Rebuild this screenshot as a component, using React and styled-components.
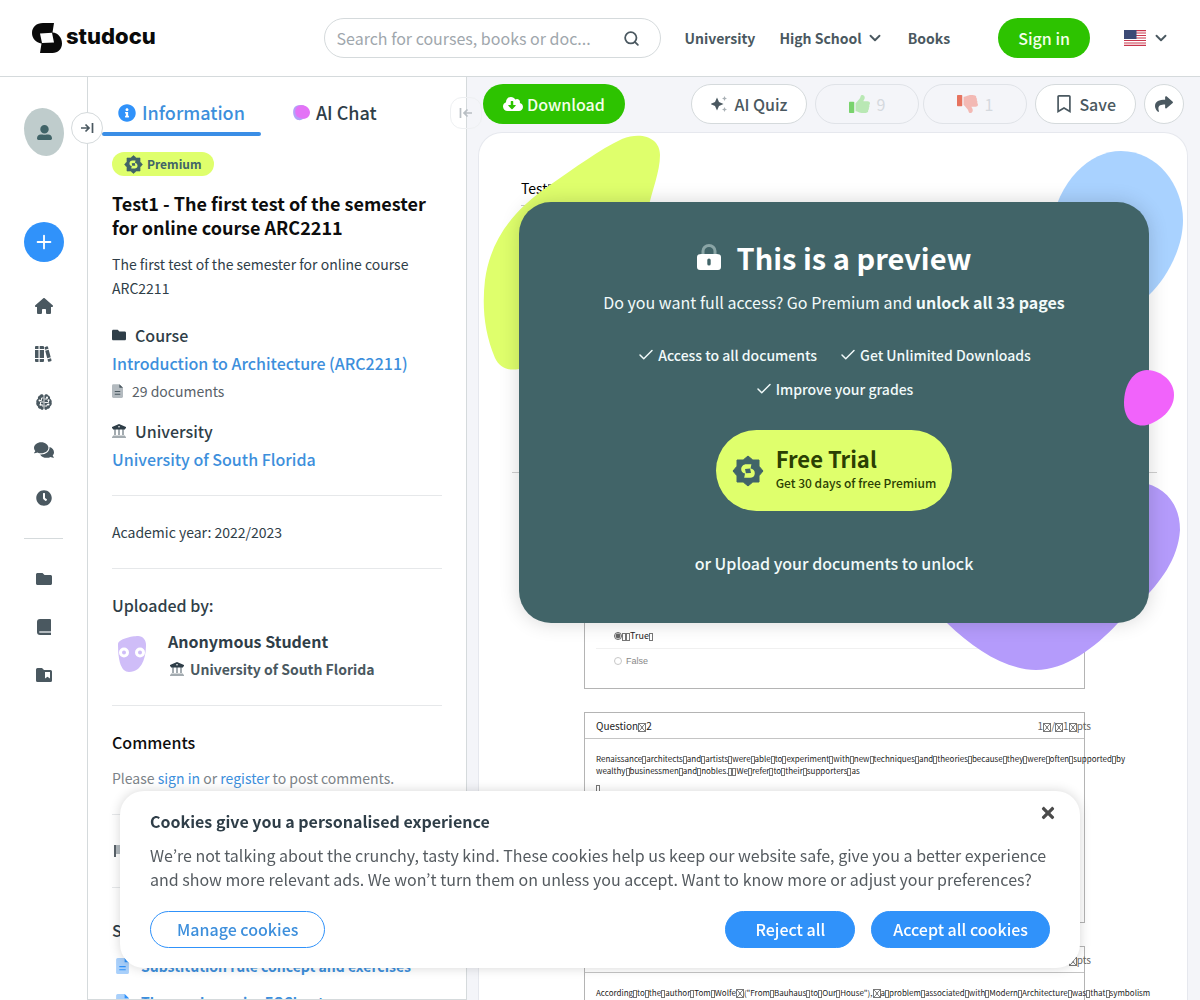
import React from "react";
import styled, { createGlobalStyle, css } from "styled-components";
import {
    FaInfoCircle,
    FaCloudDownloadAlt,
    FaShare,
    FaUserAlt,
    FaComments,
    FaClock,
    FaFolder,
    FaTimes,
    FaRegBookmark,
} from "react-icons/fa";
import { FaHouse } from "react-icons/fa6";
import { FiSearch, FiChevronDown, FiCheck, FiPlus } from "react-icons/fi";

const colors = {
    blue: "#3092fa",
    link: "#3d8fdc",
    green: "#2dc300",
    teal: "#416468",
    lime: "#dfff6c",
    ink: "#2f3e48",
    grey: "#4a5860",
    border: "#d5dadc",
    rule: "#e6e8ea",
    canvas: "#f4f5f9",
};

const GlobalStyle = createGlobalStyle`
  *, *:before, *:after {
    box-sizing: border-box;
  }

  body {
    margin: 0;
    background-color: #fff;
    color: ${colors.ink};
    font-family: "Noto Sans CJK KR", "Noto Sans CJK SC", "Noto Sans", sans-serif;
    font-size: 16px;
    line-height: 24px;
  }

  h1, h2, h3, p, ul {
    margin: 0;
    padding: 0;
    font-size: inherit;
  }

  ul {
    list-style: none;
  }

  a {
    color: inherit;
    text-decoration: none;
  }

  button, input {
    font: inherit;
    color: inherit;
  }

  button {
    padding: 0;
    border: 0;
    background: none;
    cursor: pointer;
  }

  svg {
    display: block;
    flex-shrink: 0;
  }
`;

const Page = styled.div`
  height: 100vh;
  display: flex;
  flex-direction: column;
  overflow: hidden;
`;

/* ---------- top bar ---------- */

const TopBar = styled.header`
  display: flex;
  align-items: center;
  padding: 18px 30px 18px 32px;
  border-bottom: 1px solid ${colors.border};
`;

const Logo = styled.a`
  display: flex;
  align-items: flex-start;
  gap: 4px;
  margin-right: auto;
  color: #0a0a0a;
  font-family: Inter, "Liberation Sans", sans-serif;
  font-size: 22px;
  font-weight: 800;
  line-height: 26px;
`;

const SearchBox = styled.form`
  display: flex;
  align-items: center;
  flex: 0 1 337px;
  height: 40px;
  padding: 0 20px 0 12px;
  border: 1px solid ${colors.border};
  border-radius: 20px;

  & input {
    flex: 1;
    min-width: 0;
    padding: 0;
    border: 0;
    outline: 0;
    background: none;
    text-overflow: ellipsis;
  }

  & input::placeholder {
    color: #9fa7ad;
    opacity: 1;
  }
`;

const TopNav = styled.nav`
  display: flex;
  align-items: center;
  gap: 24px;
  margin: 0 48px 0 24px;
  color: ${colors.grey};
  font-size: 14px;
  font-weight: 700;

  & button {
    display: flex;
    align-items: center;
    gap: 4px;
  }
`;

const SignIn = styled.a`
  padding: 8px 20px;
  border-radius: 20px;
  background-color: ${colors.green};
  color: #f4ffe9;
  font-weight: 500;
`;

const Country = styled.button`
  display: flex;
  align-items: center;
  gap: 6px;
  margin-left: 34px;
`;

/* ---------- rail on the left ---------- */

const Body = styled.div`
  flex: 1;
  min-height: 0;
  display: flex;
`;

const Rail = styled.nav`
  position: relative;
  flex: 0 0 87px;
  min-width: 0;
  padding: 31px 24px 0;
  color: ${colors.grey};

  & hr {
    margin: 16px 0;
    border: 0;
    border-top: 1px solid ${colors.border};
  }
`;

const Avatar = styled.button`
  display: flex;
  align-items: center;
  justify-content: center;
  width: 40px;
  height: 48px;
  margin-bottom: 66px;
  border-radius: 46% 54% 44% 56% / 42% 52% 48% 58%;
  background-color: #bfcccc;
  color: ${colors.teal};
`;

const AddButton = styled.button`
  display: flex;
  align-items: center;
  justify-content: center;
  width: 40px;
  height: 40px;
  margin-bottom: 20px;
  border-radius: 20px;
  background-color: ${colors.blue};
  color: #fff;
`;

const RailItem = styled.a`
  display: flex;
  align-items: center;
  justify-content: center;
  height: 48px;
`;

const RailToggle = styled.button`
  position: absolute;
  top: 35px;
  right: -16px;
  z-index: 2;
  display: flex;
  align-items: center;
  justify-content: center;
  width: 32px;
  height: 32px;
  border: 1px solid ${colors.border};
  border-radius: 16px;
  background-color: #fff;
`;

/* ---------- information panel ---------- */

const Panel = styled.aside`
  position: relative;
  flex: 0 0 380px;
  border: 1px solid ${colors.border};
  border-top: 0;
`;

const PanelScroll = styled.div`
  height: 100%;
  padding: 16px 24px 0;
  overflow: hidden;
`;

const Tabs = styled.div`
  display: flex;
  margin-left: -10px;
  margin-bottom: 16px;
`;

const Tab = styled.button`
  display: flex;
  align-items: center;
  gap: 6px;
  padding: 7px 16px;
  border-bottom: 4px solid transparent;
  font-size: 18px;
  font-weight: 500;
  line-height: 25px;

  ${(props) => props.$active && css`
    position: relative;
    margin-right: 16px;
    color: ${colors.link};

    &:after {
      content: "";
      position: absolute;
      left: 0;
      right: 0;
      bottom: -4px;
      height: 4px;
      border-radius: 2px;
      background-color: #3a8ee6;
    }
  `}
`;

const CollapseButton = styled.button`
  position: absolute;
  top: 20px;
  right: -16px;
  z-index: 1;
  display: flex;
  align-items: center;
  justify-content: center;
  width: 32px;
  height: 32px;
  border: 1px solid #eef0f2;
  border-radius: 12px;
  color: #b9bfc4;
`;

const Badge = styled.span`
  display: inline-flex;
  align-items: center;
  gap: 4px;
  height: 24px;
  padding: 0 12px;
  border-radius: 12px;
  background-color: ${colors.lime};
  color: ${colors.teal};
  font-size: 12px;
  font-weight: 700;
  vertical-align: top;
`;

const Title = styled.h1`
  margin-top: 15px;
  color: #0d0d0d;
  font-size: 18px;
  font-weight: 700;
`;

const Description = styled.p`
  margin-top: 13px;
  font-size: 14px;
`;

const Facts = styled.dl`
  margin: 21px 0 0;
  padding-bottom: 22px;
  line-height: 28px;

  & dt {
    display: flex;
    align-items: center;
    gap: 9px;
    font-weight: 500;
  }

  & dd {
    margin: 0;
  }

  & dd + dt {
    margin-top: 12px;
  }
`;

const BlueLink = styled.a`
  color: ${colors.link};
  font-weight: ${(props) => props.$weight || 500};
`;

const DocCount = styled.dd`
  display: flex;
  align-items: center;
  gap: 9px;
  color: #596269;
  font-size: 14px;
`;

const Section = styled.section`
  padding: ${(props) => props.$roomy ? "30px" : "24px"} 0 24px;
  border-top: 1px solid ${colors.rule};
`;

const SectionTitle = styled.h2`
  margin-bottom: 12px;
  color: ${(props) => props.$color || colors.ink};
  font-weight: 500;
`;

const SmallText = styled.p`
  color: ${(props) => props.$color || colors.ink};
  font-size: 14px;
`;

const Uploader = styled.div`
  display: flex;
  gap: 16px;
  font-weight: 700;

  & div {
    display: flex;
    flex-direction: column;
    gap: 4px;
  }

  & span {
    display: flex;
    align-items: center;
    gap: 6px;
    padding-left: 2px;
    color: ${colors.grey};
    font-size: 14px;
  }
`;

const RelatedDoc = styled.li`
  display: flex;
  align-items: center;
  gap: 12px;
  height: 24px;
  margin: 0 0 12px 4px;
  color: ${colors.link};
  font-size: 14px;
  font-weight: 700;
`;

/* ---------- document viewer ---------- */

const Viewer = styled.main`
  flex: 1;
  min-width: 0;
  display: flex;
  flex-direction: column;
  padding: 7px 12px 0 11px;
  background-color: ${colors.canvas};
`;

const Toolbar = styled.div`
  display: flex;
  align-items: center;
  gap: 8px;
  margin: 0 4px 8px 5px;
`;

const ToolButton = styled.button`
  display: flex;
  align-items: center;
  justify-content: center;
  gap: 6px;
  height: 40px;
  padding: 0 19px;
  border: 1px solid ${colors.border};
  border-radius: 20px;
  background-color: #fff;
  color: ${colors.grey};
  font-weight: 500;

  ${(props) => props.$primary && css`
    gap: 4px;
    margin-right: auto;
    padding: 0 20px;
    border: 0;
    background-color: ${colors.green};
    color: #f4ffe9;
  `}

  ${(props) => props.$round && css`
    width: 40px;
    padding: 0;
  `}

  &:disabled {
    width: 104px;
    border-color: #e0e3e8;
    background-color: transparent;
    color: #d5d9de;
    font-weight: 400;
  }
`;

const Votes = styled.div`
  display: flex;
  gap: 4px;
`;

const Sheet = styled.article`
  position: relative;
  flex: 1;
  min-height: 0;
  border: 1px solid #e6e8ee;
  border-bottom: 0;
  border-radius: 24px 24px 0 0;
  background-color: #fff;
`;

const SheetContent = styled.div`
  height: 100%;
  padding: 43px 102px 0 105px;
  overflow: hidden;
  color: #1c1c1c;
  font-size: 8px;
  line-height: 12px;
  white-space: nowrap;
`;

const DocHeading = styled.h2`
  margin: 0 -60px 0 -63px;
  padding-bottom: 5px;
  border-bottom: 1px solid #c8c8c8;
  color: #000;
  font-size: 14px;
  font-weight: 400;
  line-height: 24px;

  & i {
    width: 9px;
    height: 12px;
  }
`;

const DocRule = styled.hr`
  margin: 266px -72px 0;
  border: 0;
  border-top: 1px solid #d0d0d0;
`;

const Question = styled.section`
  min-height: ${(props) => props.$height};
  margin-top: 23px;
  border: 1px solid #b4b4b4;
`;

const QuestionHead = styled.h3`
  display: flex;
  justify-content: space-between;
  margin-bottom: 14px;
  padding: 0 0 0 11px;
  border-bottom: 1px solid #c4c4c4;
  font-size: 10px;
  font-weight: 400;
  line-height: 25px;

  & span + span {
    margin-right: -7px;
    color: #666;
  }
`;

const QuestionText = styled.p`
  padding-left: 11px;
  font-weight: 400;

  & + & {
    margin-top: 5px;
  }
`;

const Answers = styled.fieldset`
  margin: 126px 12px 0 11px;
  padding: 0;
  border: 0;
`;

const Answer = styled.label`
  display: flex;
  align-items: center;
  height: 25px;
  padding-left: 18px;
  color: ${(props) => props.$faded ? "#888" : "#222"};
  font-size: 9px;
  font-family: ${(props) => props.$faded ? "\"Liberation Sans\", sans-serif" : "inherit"};

  & + & {
    border-top: 1px solid #f0f0f0;
  }

  & input {
    width: 8px;
    height: 8px;
    margin: 0 ${(props) => props.$faded ? "4px" : "0"} 0 0;
    accent-color: #555;
    opacity: ${(props) => props.$faded ? 0.4 : 0.9};
  }
`;

// a space that the document's font has no glyph for
const Blank = styled.i`
  display: inline-block;
  width: 4px;
  height: 8px;
  border: 1px solid #777;
  overflow: hidden;
  vertical-align: -2px;

  ${(props) => props.$crossed && css`
    width: 8px;
    height: 9px;
    background:
      linear-gradient(50deg, transparent 44%, #888 46%, #888 54%, transparent 56%),
      linear-gradient(-50deg, transparent 44%, #888 46%, #888 54%, transparent 56%);
  `}
`;

/* ---------- preview paywall ---------- */

const Preview = styled.div`
  position: absolute;
  top: 69px;
  left: 40px;
  right: 38px;
  display: flex;
  flex-direction: column;
  align-items: center;
  color: #f1fafa;
`;

const PreviewCard = styled.section`
  position: relative;
  width: 100%;
  padding: 34px 60px 37px;
  display: flex;
  flex-direction: column;
  align-items: center;
  border-radius: 32px;
  background-color: ${colors.teal};
  box-shadow: 0 0 20px rgba(0, 0, 0, 0.16);

  & > p {
    margin-top: 12px;
  }

  & > a {
    font-weight: 500;
    line-height: 46px;
  }
`;

const PreviewTitle = styled.h2`
  display: flex;
  align-items: center;
  gap: 16px;
  color: #fff;
  font-size: 29px;
  font-weight: 700;
  line-height: 42px;
`;

const Perks = styled.ul`
  display: flex;
  flex-wrap: wrap;
  justify-content: center;
  gap: 10px 22px;
  margin: 29px 0;
  font-size: 14px;
  font-weight: 500;

  & li {
    display: flex;
    align-items: center;
    gap: 3px;
  }
`;

const TrialButton = styled.button`
  display: flex;
  align-items: center;
  gap: 12px;
  height: 81px;
  margin-bottom: 29px;
  padding: 0 16px;
  border-radius: 41px;
  background-color: ${colors.lime};
  color: #2b4003;
  font-size: 12px;
  font-weight: 500;
  line-height: 20px;
  text-align: left;

  & span {
    padding-bottom: 6px;
  }

  & strong {
    display: block;
    font-size: 22px;
    font-weight: 700;
    line-height: 30px;
  }
`;

const Blobs = styled.svg`
  position: absolute;
  top: -70px;
  right: -40px;
  pointer-events: none;
`;

/* ---------- cookie banner ---------- */

const CookieBanner = styled.section`
  position: fixed;
  right: 10%;
  bottom: 32px;
  left: 10%;
  z-index: 5;
  padding: 18px 30px 20px;
  border-radius: 24px;
  background-color: #fff;
  box-shadow: 0 0 12px rgba(0, 0, 0, 0.16);
  color: #555b60;

  & h2 {
    margin-bottom: 10px;
    color: ${colors.ink};
    font-weight: 700;
  }
`;

const CloseButton = styled.button`
  position: absolute;
  top: 13px;
  right: 23px;
  color: #4b4b4b;
`;

const CookieActions = styled.div`
  display: flex;
  gap: 16px;
  margin-top: 20px;
`;

const CookieButton = styled.button`
  height: 37px;
  padding: 0 ${(props) => props.$wide ? "29px" : "21px"} 2px;
  border: 1px solid ${colors.blue};
  border-radius: 19px;
  background-color: ${colors.blue};
  color: #fff;
  font-weight: 500;

  ${(props) => props.$outline && css`
    margin-right: auto;
    padding: 0 26px 2px;
    background-color: #fff;
    color: ${colors.link};
  `}
`;

/* ---------- drawings ---------- */

const StudocuMark = () => (
    <svg width="30" height="30" viewBox="0 0 30 30" aria-hidden="true">
        <path
            fill="#0a0a0a"
            fillRule="evenodd"
            d="M11 0H22L20.500 9.500C26 10 30 14.500 30 20.500C30 26 26 30 20.500 30H8L9.500 20.500C4 19.500 0 15.500 0 10C0 4 4.500 0 11 0ZM8 10.500L10 20L22 19.500L20 9.700Z"
        />
    </svg>
);

const PremiumSeal = ({ size, inner }) => (
    <svg width={size} height={size} viewBox="0 0 32 32" aria-hidden="true">
        <path
            fill={colors.teal}
            stroke={colors.teal}
            strokeLinejoin="round"
            d="M16 1L20.800 5H27V11.200L31 16L27 20.800V27H20.800L16 31L11.200 27H5V20.800L1 16L5 11.200V5H11.200Z"
        />
        <path
            fill={inner}
            fillRule="evenodd"
            transform="translate(2.400 2.400) scale(.85)"
            d="M14 8H20L19 13.200C22 13.500 24 15.500 24 18.500C24 22 21.500 24 18.500 24H11.500L12.500 19C9.500 18.500 8 16.500 8 14C8 10.500 10.500 8 14 8ZM12.500 13.500L13.500 18.500L19.500 18.300L18.500 13.200Z"
        />
    </svg>
);

const UsFlag = () => (
    <svg width="22" height="16" viewBox="0 0 22 16" aria-hidden="true">
        <path fill="#fff" d="M0 0H22V16H0Z" />
        <path
            stroke="#c9364d"
            strokeWidth="1.200"
            d="M0 .6H22M0 3H22M0 5.500H22M0 8H22M0 10.500H22M0 13H22M0 15.400H22"
        />
        <path fill="#3c4a75" d="M0 0H12.500V9H0Z" />
    </svg>
);

const ArrowToBar = ({ size = 14, flipped }) => (
    <svg
        width={size}
        height={size}
        viewBox="0 0 14 14"
        fill="none"
        stroke="currentColor"
        strokeWidth="1.700"
        aria-hidden="true"
    >
        <path d={flipped ? "M1.500 2V12M13 7H5M8.500 3.500L5 7L8.500 10.500" : "M12.500 2V12M1 7H9M5.500 3.500L9 7L5.500 10.500"} />
    </svg>
);

const Books = () => (
    <svg width="17" height="16" viewBox="0 0 17 16" fill="currentColor" aria-hidden="true">
        <path d="M0 1Q0 0 1 0H3.500V3H0ZM0 4H3.500V12H0ZM0 13H3.500V16H1Q0 16 0 15ZM4.700 0H8Q9 0 9 1V3H4.700ZM4.700 4H9V12H4.700ZM4.700 13H9V15Q9 16 8 16H4.700Z" />
        <path d="M9.500 1.200L12 .3Q12.800 .2 13 1L13.500 2.800L10 3.800ZM10.200 4.800L13.700 3.800L15.700 11.300L12.200 12.300ZM12.500 13.200L16 12.200L16.500 14.200Q16.600 15 15.800 15.300L14 15.800Q13.200 15.900 13 15.200Z" />
    </svg>
);

const Brain = () => (
    <svg width="16" height="16" viewBox="0 0 16 16" aria-hidden="true">
        <path
            fill="currentColor"
            d="M7.600 1.500C7 .2 4.600-.4 3.900 1.500C2.200 1.900 1.600 3.500 2 4.800C.5 5.600 0 7 .4 8.400C-.1 10 .5 11.600 1.800 12.200C1.900 14.200 3.500 14.900 4.300 14.800C5.300 16.400 7.200 16.200 7.600 14.800ZM8.400 1.500C9 .2 11.400-.4 12.100 1.500C13.800 1.900 14.400 3.500 14 4.800C15.500 5.600 16 7 15.600 8.400C16.100 10 15.500 11.600 14.200 12.200C14.100 14.200 12.500 14.900 11.700 14.800C10.700 16.400 8.800 16.200 8.400 14.800Z"
        />
        <g fill="none" stroke="#fff" strokeWidth=".9">
            <path d="M7.500 4H5.500V6.500H3.500M7.500 8H4.500V10.500M7.500 12H6V10M8.500 5H11V3.500M8.500 8.500H12.500V6.500M8.500 12H11V10.500H13" />
        </g>
        <g fill="#fff">
            <circle cx="3.500" cy="6.500" r="1" />
            <circle cx="4.500" cy="10.700" r="1" />
            <circle cx="11" cy="3.500" r="1" />
            <circle cx="12.500" cy="6.300" r="1" />
            <circle cx="12.500" cy="10.500" r="1" />
        </g>
    </svg>
);

const Book = () => (
    <svg width="14" height="16" viewBox="0 0 14 16" aria-hidden="true">
        <path fill="currentColor" d="M3 0H13Q14 0 14 1V16H3Q0 16 0 13V3Q0 0 3 0Z" />
        <path fill="#b4bbc0" d="M3 12H14V14H3Q2 14 2 13T3 12Z" />
    </svg>
);

const FolderBookmark = () => (
    <svg width="16" height="14" viewBox="0 0 16 14" aria-hidden="true">
        <path fill="currentColor" d="M1.500 0H6L8 2H14.500Q16 2 16 3.500V12.500Q16 14 14.500 14H1.500Q0 14 0 12.500V1.500Q0 0 1.500 0Z" />
        <path fill="#fff" d="M9 4H14V10.500L11.500 8.700L9 10.500Z" />
    </svg>
);

const FileIcon = ({ size = 14, body = "#b3babf", ink = "#4a5860" }) => (
    <svg width={size - 3} height={size} viewBox="0 0 12 15" aria-hidden="true">
        <path fill={body} d="M1.500 0H8L12 4V13.500Q12 15 10.500 15H1.500Q0 15 0 13.500V1.500Q0 0 1.500 0Z" />
        <path fill={ink} d="M8 0L12 4H8ZM3 7.500H9V8.600H3ZM3 10.500H9V11.600H3Z" />
    </svg>
);

const Institution = () => (
    <svg width="14" height="14" viewBox="0 0 14 14" aria-hidden="true">
        <path fill="#a3abb0" d="M2 5H4V11H2ZM6 5H8V11H6ZM10 5H12V11H10ZM1 11.500H13V12.500H14V14H0V12.500H1Z" />
        <path fill={colors.ink} d="M7 0L14 3V4.500H13V5.500H1V4.500H0V3Z" />
        <circle cx="7" cy="2.800" r=".8" fill="#fff" />
    </svg>
);

const Thumb = ({ fill, cuff, down }) => (
    <svg width="21" height="18" viewBox="0 0 512 512" preserveAspectRatio="none" aria-hidden="true">
        <g transform={down ? "matrix(1 0 0 -1 0 512)" : undefined}>
            <path fill={cuff} d="M104 190H24c-13 0-24 11-24 24v274c0 13 11 24 24 24h80c13 0 24-11 24-24V214c0-13-11-24-24-24z" />
            <path
                fill={fill}
                d="M384 81c0 43-26 66-33 95h101c34 0 60 28 60 58 0 18-8 37-20 49 10 24 8 57-9 80 8 26 0 58-17 75 5 17 3 32-6 44-20 30-70 30-113 30h-3c-48 0-88-18-120-32-16-7-36-16-52-16-7 0-12-5-12-12V238c0-3 1-6 4-8 39-39 56-81 89-113 15-15 20-38 25-59C283 39 292 0 312 0c24 0 72 8 72 81z"
            />
        </g>
    </svg>
);

const Sparkles = () => (
    <svg width="17" height="16" viewBox="0 0 17 16" aria-hidden="true">
        <path fill={colors.grey} d="M6 1.500L8 6L12.500 8L8 10L6 14.500L4 10L-.5 8L4 6Z" />
        <path fill="#a9b0b5" d="M13.500 0L14.300 1.700L16 2.500L14.300 3.300L13.500 5L12.700 3.300L11 2.500L12.700 1.700ZM13.500 11L14.300 12.700L16 13.500L14.300 14.300L13.500 16L12.700 14.300L11 13.500L12.700 12.700Z" />
    </svg>
);

const Lock = () => (
    <svg width="24" height="26" viewBox="0 0 24 26" aria-hidden="true">
        <path fill="none" stroke="#8aa5a6" strokeWidth="3" d="M6 11V7A6 5.500 0 0 1 18 7V11" />
        <path fill="#fff" fillRule="evenodd" d="M4 10H20Q24 10 24 13V23Q24 26 21 26H3Q0 26 0 23V13Q0 10 4 10ZM12 14.500Q10.300 14.500 10.300 16V20Q10.300 21.500 12 21.500T13.700 20V16Q13.700 14.500 12 14.500Z" />
    </svg>
);

const AiBlob = () => (
    <svg width="17" height="16" viewBox="0 0 17 16" aria-hidden="true">
        <path fill="#b1a2f8" d="M3 1C7-1 14 0 15 5C16 11 10 16 5 15C0 14-2 4 3 1Z" />
        <path fill="#e373f6" d="M5 1C10-1 16 1 17 7C17 13 12 15 7 13C1 12 1 3 5 1Z" />
    </svg>
);

const StudentFace = () => (
    <svg width="40" height="48" viewBox="0 0 40 48" aria-hidden="true">
        <path fill="#cfbdf8" d="M6 15C6 10 20 7 26 7C31 7 34 11 34 16C34 28 30 43 17 43C9 43 6 32 6 15Z" />
        <circle cx="12" cy="23.500" r="3.500" fill="none" stroke="#fff" strokeWidth="3" />
        <circle cx="28" cy="23.500" r="3.500" fill="none" stroke="#fff" strokeWidth="3" />
    </svg>
);

// "_" stands for a narrow blank, "^" for a crossed one
const DocText = ({ children }) =>
    children.split(/([_^])/).map((part, i) =>
        part === "_" || part === "^"
            ? <Blank key={i} $crossed={part === "^"}> </Blank>
            : part
    );

const railTop = [
    { label: "Home", icon: <FaHouse size={18} /> },
    { label: "My Library", icon: <Books /> },
    { label: "AI", icon: <Brain /> },
    { label: "Ask", icon: <FaComments size={20} /> },
    { label: "Recent", icon: <FaClock size={16} /> },
];

const railBottom = [
    { label: "Courses", icon: <FaFolder size={16} /> },
    { label: "Books", icon: <Book /> },
    { label: "Studylists", icon: <FolderBookmark /> },
];

const perks = ["Access to all documents", "Get Unlimited Downloads", "Improve your grades"];

const Header = () => (
    <TopBar>
        <Logo href="#">
            <StudocuMark />
            studocu
        </Logo>
        <SearchBox>
            <input type="search" aria-label="Search" placeholder="Search for courses, books or doc..." />
            <FiSearch size={17} color={colors.grey} strokeWidth={2.5} />
        </SearchBox>
        <TopNav>
            <a href="#">University</a>
            <button type="button">
                High School
                <FiChevronDown size={18} strokeWidth={2.5} />
            </button>
            <a href="#">Books</a>
        </TopNav>
        <SignIn href="#">Sign in</SignIn>
        <Country type="button" aria-label="Country">
            <UsFlag />
            <FiChevronDown size={18} strokeWidth={2.5} color={colors.grey} />
        </Country>
    </TopBar>
);

const SideRail = () => (
    <Rail>
        <RailToggle type="button" aria-label="Expand menu">
            <ArrowToBar />
        </RailToggle>
        <Avatar type="button" aria-label="Account">
            <FaUserAlt size={15} />
        </Avatar>
        <AddButton type="button" aria-label="Upload">
            <FiPlus size={22} />
        </AddButton>
        {railTop.map((item) => (
            <RailItem key={item.label} href="#" aria-label={item.label}>{item.icon}</RailItem>
        ))}
        <hr />
        {railBottom.map((item) => (
            <RailItem key={item.label} href="#" aria-label={item.label}>{item.icon}</RailItem>
        ))}
    </Rail>
);

const InfoPanel = () => (
    <Panel>
        <CollapseButton type="button" aria-label="Collapse panel">
            <ArrowToBar flipped />
        </CollapseButton>
        <PanelScroll>
            <Tabs>
                <Tab type="button" $active>
                    <FaInfoCircle size={18} color={colors.blue} />
                    Information
                </Tab>
                <Tab type="button">
                    <AiBlob />
                    AI Chat
                </Tab>
            </Tabs>
            <Badge>
                <PremiumSeal size={19} inner={colors.lime} />
                Premium
            </Badge>
            <Title>Test1 - The first test of the semester for online course ARC2211</Title>
            <Description>The first test of the semester for online course ARC2211</Description>
            <Facts>
                <dt><FaFolder size={14} />Course</dt>
                <dd><BlueLink href="#">Introduction to Architecture (ARC2211)</BlueLink></dd>
                <DocCount><FileIcon />29 documents</DocCount>
                <dt><Institution />University</dt>
                <dd><BlueLink href="#">University of South Florida</BlueLink></dd>
            </Facts>
            <Section>
                <SmallText>Academic year: 2022/2023</SmallText>
            </Section>
            <Section>
                <SectionTitle>Uploaded by:</SectionTitle>
                <Uploader>
                    <StudentFace />
                    <div>
                        <a href="#">Anonymous Student</a>
                        <span><Institution />University of South Florida</span>
                    </div>
                </Uploader>
            </Section>
            <Section>
                <SectionTitle $color="#0d0d0d">Comments</SectionTitle>
                <SmallText $color="#7c8388">
                    Please <BlueLink href="#" $weight={400}>sign in</BlueLink> or{" "}
                    <BlueLink href="#" $weight={400}>register</BlueLink> to post comments.
                </SmallText>
            </Section>
            <Section>
                <svg width="16" height="24" viewBox="0 0 16 24" aria-hidden="true">
                    <path fill="#b3babf" d="M4 6H16V15H4Z" />
                    <path fill="#596269" d="M2 6H4V18H2Z" />
                </svg>
            </Section>
            <Section $roomy>
                <SectionTitle>Students also viewed</SectionTitle>
                <ul>
                    <RelatedDoc>
                        <FileIcon size={16} body="#a9d0fb" ink={colors.blue} />
                        <a href="#">Substitution rule concept and exercises</a>
                    </RelatedDoc>
                    <RelatedDoc>
                        <FileIcon size={16} body="#a9d0fb" ink={colors.blue} />
                        <a href="#">Thermodynamics EQSheet</a>
                    </RelatedDoc>
                </ul>
            </Section>
        </PanelScroll>
    </Panel>
);

const PreviewWall = () => (
    <Preview>
        <Blobs width="710" height="550" viewBox="479 132 710 550" aria-hidden="true">
            <path fill={colors.lime} d="M622 139C642 131 660 138 660 155C660 172 652 190 648 210L600 340L519 369C508 371 500 368 495 358C484 332 482 306 485 280C490 243 510 212 550 185C575 168 600 149 622 139Z" />
            <path fill="#a9d2ff" d="M1050 230C1058 180 1090 151 1121 151C1158 151 1183 186 1183 220C1183 250 1165 280 1149 295L1100 300Z" />
            <path fill="#b49bfb" d="M1140 482C1165 486 1180 504 1180 530C1178 560 1160 582 1140 603L1118 623C1095 648 1065 670 1036 670C1005 669 975 650 947 623L900 560Z" />
        </Blobs>
        <PreviewCard>
            <PreviewTitle><Lock />This is a preview</PreviewTitle>
            <p>Do you want full access? Go Premium and <b>unlock all 33 pages</b></p>
            <Perks>
                {perks.map((perk) => (
                    <li key={perk}><FiCheck size={18} />{perk}</li>
                ))}
            </Perks>
            <TrialButton type="button">
                <PremiumSeal size={32} inner={colors.lime} />
                <span>
                    <strong>Free Trial</strong>
                    Get 30 days of free Premium
                </span>
            </TrialButton>
            <a href="#">or Upload your documents to unlock</a>
        </PreviewCard>
        <Blobs width="710" height="550" viewBox="479 132 710 550" aria-hidden="true">
            <path fill="#f163fb" d="M1147 370C1163 371 1174 382 1174 395C1174 410 1160 421 1147 425C1133 428 1124 418 1124 403C1124 384 1134 370 1147 370Z" />
        </Blobs>
    </Preview>
);

const DocumentViewer = () => (
    <Viewer>
        <Toolbar>
            <ToolButton type="button" $primary>
                <FaCloudDownloadAlt size={20} color="#fff" />
                Download
            </ToolButton>
            <ToolButton type="button"><Sparkles />AI Quiz</ToolButton>
            <Votes>
                <ToolButton type="button" disabled>
                    <Thumb fill="#b9e8b4" cuff="#79d36d" />9
                </ToolButton>
                <ToolButton type="button" disabled>
                    <Thumb fill="#f3b9b4" cuff="#e6735f" down />1
                </ToolButton>
            </Votes>
            <ToolButton type="button"><FaRegBookmark size={18} />Save</ToolButton>
            <ToolButton type="button" $round aria-label="Share"><FaShare size={18} /></ToolButton>
        </Toolbar>
        <Sheet>
            <SheetContent>
                <DocHeading><DocText>Test^</DocText></DocHeading>
                <DocRule />
                <Question $height="193px">
                    <Answers>
                        <Answer>
                            <input type="radio" name="answer" defaultChecked />
                            <span><DocText>__True_</DocText></span>
                        </Answer>
                        <Answer $faded>
                            <input type="radio" name="answer" />
                            False
                        </Answer>
                    </Answers>
                </Question>
                <Question $height="211px">
                    <QuestionHead>
                        <span><DocText>Question^2</DocText></span>
                        <span><DocText>1^/^1^pts</DocText></span>
                    </QuestionHead>
                    <QuestionText>
                        <DocText>Renaissance_architects_and_artists_were_able_to_experiment_with_new_techniques_and_theories_because_they_were_often_supported_by</DocText>
                        <br />
                        <DocText>wealthy_businessmen_and_nobles.__We_refer_to_their_supporters_as</DocText>
                    </QuestionText>
                    <QuestionText><DocText>_</DocText></QuestionText>
                </Question>
                <Question $height="211px">
                    <QuestionHead>
                        <span><DocText>Question^3</DocText></span>
                        <span><DocText>1^/^1^pts</DocText></span>
                    </QuestionHead>
                    <QuestionText>
                        <DocText>According_to_the_author_Tom_Wolfe^("From_Bauhaus_to_Our_House"),^a_problem_associated_with_Modern_Architecture_was_that_symbolism</DocText>
                        <br />
                        <DocText>became_reduced_to_what_he_called_"^Bank^as_a_House_and_"Factory_as_House_as_Museum"_rather_than_^both_The</DocText>
                    </QuestionText>
                </Question>
            </SheetContent>
            <PreviewWall />
        </Sheet>
    </Viewer>
);

const Cookies = () => (
    <CookieBanner>
        <CloseButton type="button" aria-label="Close"><FaTimes size={18} /></CloseButton>
        <h2>Cookies give you a personalised experience</h2>
        <p>
            We’re not talking about the crunchy, tasty kind. These cookies help us keep our website safe, give you a
            better experience and show more relevant ads. We won’t turn them on unless you accept. Want to know more or
            adjust your preferences?
        </p>
        <CookieActions>
            <CookieButton type="button" $outline>Manage cookies</CookieButton>
            <CookieButton type="button" $wide>Reject all</CookieButton>
            <CookieButton type="button">Accept all cookies</CookieButton>
        </CookieActions>
    </CookieBanner>
);

export default function App() {
    return (
        <Page>
            <GlobalStyle />
            <Header />
            <Body>
                <SideRail />
                <InfoPanel />
                <DocumentViewer />
            </Body>
            <Cookies />
        </Page>
    );
}
